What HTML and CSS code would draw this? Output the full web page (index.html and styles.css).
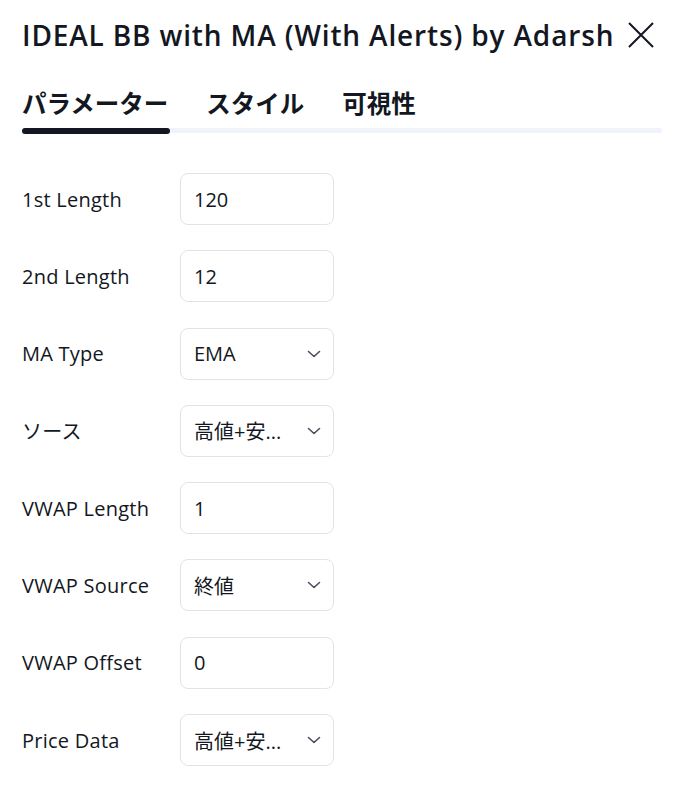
FILE: index.html
```html
<!DOCTYPE html>
<html lang="ja">
<head>
<meta charset="utf-8">
<link rel="stylesheet" href="styles.css">
</head>
<body>
<div class="dialog">
  <div class="header">
    <h1 class="title">IDEAL BB with MA (With Alerts) by Adarsh</h1>
    <button class="close" aria-label="close">
      <svg width="26" height="26" viewBox="0 0 26 26"><path d="M1 1 L25 25 M25 1 L1 25" stroke="#131722" stroke-width="2" fill="none"/></svg>
    </button>
  </div>
  <div class="tabs">
    <div class="tab active">パラメーター</div>
    <div class="tab">スタイル</div>
    <div class="tab">可視性</div>
  </div>
  <div class="track"><div class="indicator"></div></div>
  <div class="form">
    <div class="row"><div class="label">1st Length</div><div class="field">120</div></div>
    <div class="row"><div class="label">2nd Length</div><div class="field">12</div></div>
    <div class="row"><div class="label">MA Type</div><div class="field select"><span>EMA</span><svg class="chev" width="14" height="8" viewBox="0 0 14 8"><path d="M1.5 1.5 L7 6.5 L12.5 1.5" stroke="#4a4e5a" stroke-width="1.6" fill="none" stroke-linecap="round" stroke-linejoin="round"/></svg></div></div>
    <div class="row"><div class="label">ソース</div><div class="field select"><span>高値+安...</span><svg class="chev" width="14" height="8" viewBox="0 0 14 8"><path d="M1.5 1.5 L7 6.5 L12.5 1.5" stroke="#4a4e5a" stroke-width="1.6" fill="none" stroke-linecap="round" stroke-linejoin="round"/></svg></div></div>
    <div class="row"><div class="label">VWAP Length</div><div class="field">1</div></div>
    <div class="row"><div class="label">VWAP Source</div><div class="field select"><span>終値</span><svg class="chev" width="14" height="8" viewBox="0 0 14 8"><path d="M1.5 1.5 L7 6.5 L12.5 1.5" stroke="#4a4e5a" stroke-width="1.6" fill="none" stroke-linecap="round" stroke-linejoin="round"/></svg></div></div>
    <div class="row"><div class="label">VWAP Offset</div><div class="field">0</div></div>
    <div class="row"><div class="label">Price Data</div><div class="field select"><span>高値+安...</span><svg class="chev" width="14" height="8" viewBox="0 0 14 8"><path d="M1.5 1.5 L7 6.5 L12.5 1.5" stroke="#4a4e5a" stroke-width="1.6" fill="none" stroke-linecap="round" stroke-linejoin="round"/></svg></div></div>
  </div>
</div>
</body>
</html>
```
FILE: styles.css
```css
html, body {
  margin: 0;
  padding: 0;
  background: #ffffff;
}
body {
  font-family: "Open Sans", "Noto Sans CJK JP", sans-serif;
  color: #131722;
}
.dialog {
  padding: 0 18px 0 22px;
  width: 640px;
}
.header {
  display: flex;
  align-items: center;
  justify-content: space-between;
  height: 70px;
}
.title {
  margin: 0;
  font-size: 28px;
  font-weight: 600;
  letter-spacing: 0.85px;
  line-height: 1;
  white-space: nowrap;
}
.close {
  border: 0;
  background: none;
  padding: 0;
  margin-right: 8px;
  display: flex;
}
.tabs {
  display: flex;
  gap: 38px;
  margin-top: 18px;
  height: 40px;
}
.tab {
  font-family: "Noto Sans CJK JP", sans-serif;
  font-size: 24.5px;
  font-weight: 700;
  line-height: 30px;
}
.track {
  height: 5px;
  background: #f0f3fa;
  border-radius: 3px;
}
.indicator {
  width: 148px;
  height: 6px;
  background: #131722;
  border-radius: 3px;
}
.form {
  padding-top: 40px;
  display: flex;
  flex-direction: column;
  gap: 25.3px;
}
.row {
  display: flex;
  align-items: center;
  height: 52px;
}
.label {
  width: 158px;
  font-size: 20px;
  letter-spacing: 0.25px;
  color: #131722;
  white-space: nowrap;
}
.field {
  box-sizing: border-box;
  width: 154px;
  height: 52px;
  border: 1px solid #e0e3eb;
  border-radius: 8px;
  display: flex;
  align-items: center;
  justify-content: space-between;
  padding: 0 12px 0 13px;
  font-size: 20px;
  color: #131722;
}
.chev {
  display: block;
}
```
